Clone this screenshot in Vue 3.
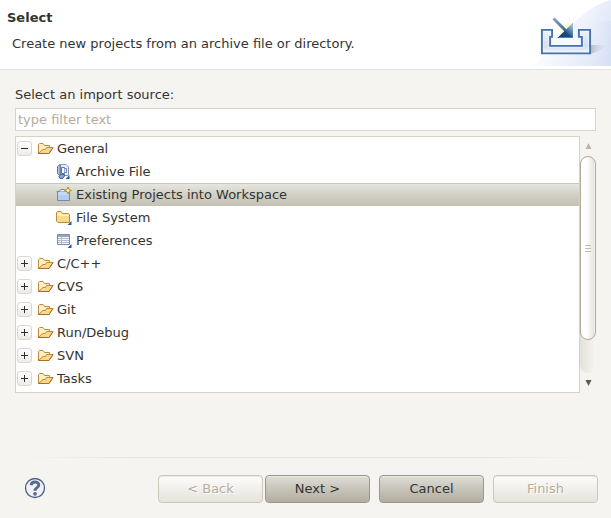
<script setup>
import { ref, computed } from 'vue'

const filter = ref('')
const selected = ref('Existing Projects into Workspace')
const groups = ref([
  {
    name: 'General',
    open: true,
    children: [
      { name: 'Archive File', icon: 'archive' },
      { name: 'Existing Projects into Workspace', icon: 'project' },
      { name: 'File System', icon: 'files' },
      { name: 'Preferences', icon: 'prefs' },
    ],
  },
  ...['C/C++', 'CVS', 'Git', 'Run/Debug', 'SVN', 'Tasks'].map((name) => ({ name, open: false, children: [] })),
])

const rows = computed(() => {
  const q = filter.value.toLowerCase()
  return groups.value.flatMap((g) => {
    const kids = g.children.filter((c) => c.name.toLowerCase().includes(q))
    if (!kids.length && !g.name.toLowerCase().includes(q)) return []
    const head = { name: g.name, icon: 'folder', group: g }
    return g.open ? [head, ...kids] : [head]
  })
})
</script>

<template>
  <main class="wizard">
    <header class="banner">
      <div class="titles">
        <h1>Select</h1>
        <p>Create new projects from an archive file or directory.</p>
      </div>
      <svg class="art" width="91" height="69" viewBox="0 0 91 69" aria-hidden="true">
        <defs>
          <linearGradient id="sky" gradientUnits="userSpaceOnUse" x1="22" y1="30" x2="88" y2="62">
            <stop offset="0" stop-color="#fff" />
            <stop offset=".5" stop-color="#edf2fb" />
            <stop offset="1" stop-color="#dae3f6" />
          </linearGradient>
          <linearGradient id="wave" x1="0" y1="0" x2="1" y2="0">
            <stop offset="0" stop-color="#fff" stop-opacity="0" />
            <stop offset="1" stop-color="#cfdbf3" />
          </linearGradient>
          <linearGradient id="tray" x1="0" y1="0" x2="0" y2="1">
            <stop offset="0" stop-color="#edf2fa" />
            <stop offset=".7" stop-color="#d6def0" />
            <stop offset="1" stop-color="#f3f6fc" />
          </linearGradient>
          <linearGradient id="shaft" gradientUnits="userSpaceOnUse" x1="33" y1="18" x2="47" y2="32">
            <stop offset="0" stop-color="#86a8ca" />
            <stop offset="1" stop-color="#2d5f93" />
          </linearGradient>
          <linearGradient id="tip" gradientUnits="userSpaceOnUse" x1="42" y1="38" x2="53" y2="27">
            <stop offset="0" stop-color="#1b4a7c" />
            <stop offset=".5" stop-color="#2f6297" />
            <stop offset="1" stop-color="#9dbad4" />
          </linearGradient>
          <radialGradient id="glow">
            <stop offset="0" stop-color="#fff9c8" />
            <stop offset="1" stop-color="#fffce0" stop-opacity=".5" />
          </radialGradient>
          <linearGradient id="shade" x1="0" y1="0" x2="1" y2="0">
            <stop offset="0" stop-color="#a5a3b2" stop-opacity=".7" />
            <stop offset="1" stop-color="#c9cbdc" stop-opacity="0" />
          </linearGradient>
        </defs>
        <path d="M10 66C40 50 52 10 91 0V66Z" fill="url(#sky)" />
        <path d="M50 34C62 24 76 20 91 21V66H50Z" fill="url(#wave)" opacity=".35" />
        <path d="M70 45L87 45Q81 51 70 54Z" fill="url(#shade)" />
        <circle cx="45" cy="29" r="7.500" fill="url(#glow)" />
        <path d="M30 37H61V46H30Z" fill="#f6f9fe" />
        <path d="M21.900 29.900H32.100V36.900H30.100V45.900H61.900V36.900H58.900V29.900H70.100V53.400H21.900Z" fill="url(#tray)" stroke="#4473ad" stroke-width="1.900" />
        <path d="M23.500 31.500H30.500V35.500H28.500V47.500H63.500V35.500H60.500V31.500H68.500V51.500H23.500Z" fill="none" stroke="#fff" stroke-opacity=".35" />
        <path d="M33.500 18.500L48 33" stroke="url(#shaft)" stroke-width="3" />
        <path d="M53 22.500V38H37.500Z" fill="url(#tip)" />
        <path d="M45 31L53 38H37.500Z" fill="#174372" opacity=".75" />
        <path d="M39 37.500H53" stroke="#5580a9" />
      </svg>
    </header>

    <section class="body">
      <label for="filter">Select an import source:</label>
      <input id="filter" v-model="filter" type="text" placeholder="type filter text" />
      <div class="tree-area">
        <ul class="tree" role="tree" aria-label="Import sources">
          <li
            v-for="row in rows"
            :key="row.name"
            role="treeitem"
            :class="{ child: !row.group, selected: selected === row.name }"
            :aria-selected="selected === row.name"
            @click="selected = row.name"
          >
            <button
              v-if="row.group"
              class="toggle"
              type="button"
              :aria-label="row.group.open ? 'Collapse' : 'Expand'"
              @click.stop="row.group.open = !row.group.open"
            >
              <svg width="13" height="13" viewBox="0 0 13 13">
                <path :d="row.group.open ? 'M3 6.500H10' : 'M3 6.500H10M6.500 3V10'" stroke="#2f2f2f" />
              </svg>
            </button>
            <svg class="icon" width="16" height="16" viewBox="0 0 16 16" aria-hidden="true">
              <g v-if="row.icon === 'folder'" stroke="#bd8a3e" stroke-linejoin="round">
                <path d="M.5 12.500V3.500L1.500 2.500H5L6.500 4.500H11.500V7" fill="#fdf0c4" />
                <path d="M.5 12.500L5 8.500H7.500L8.500 6.500H15L11 12.500Z" fill="#fbd98c" />
                <path d="M.5 12.500H11L15 6.500" fill="none" stroke="#a96c22" />
              </g>
              <g v-else-if="row.icon === 'archive'">
                <path d="M4.500 .5H10L12.500 3V11.500H4.500Z" fill="#e9eff9" stroke="#7f98c2" />
                <path d="M4 .5L1.500 2.500V9.500L4 11.500Z" fill="#b9c9e4" stroke="#5472a9" />
                <path d="M5.500 3.500H8.500V9.500H5.500Z" fill="#fff" stroke="#5875ab" />
                <path d="M8.500 4.500H10.500V8.500H8.500" fill="#dfe7f5" stroke="#7088b7" />
                <path d="M3 12.500L5 10.500H8.500V12L6.500 14.500H4Z" fill="#86a3d3" stroke="#42629f" />
                <path d="M13.500 11V15H9.500Z" fill="#17609f" />
              </g>
              <g v-else-if="row.icon === 'project'">
                <path d="M1.500 13.500V4.500H13.500V13.500Z" fill="#b3cdee" stroke="#7385ba" />
                <path d="M2 5H13V8H2Z" fill="#c4d9f3" />
                <path d="M.5 4.500H3.500L4.500 2.500H8.500L9.500 4.500" fill="#e7ebe9" stroke="#83898c" />
                <path d="M12 0L13 2.500L15.500 3.500L13 4.500L12 7L11 4.500L8.500 3.500L11 2.500Z" fill="#fff6b5" stroke="#b4901f" />
              </g>
              <g v-else-if="row.icon === 'files'">
                <path d="M.5 11V2.500L1.500 1.500H5L6.500 3.500H12L13.500 4.500V12.500H2Z" fill="#fbdb8b" stroke="#bd8a3c" />
                <path d="M1.500 3L2 2.500H4.500L6 4.500H12.500V6H1.500Z" fill="#fff0c0" />
                <path d="M15.500 11V15H11.500Z" fill="#17609f" />
              </g>
              <g v-else>
                <path d="M1.500 1.500H13.500V11.500H1.500Z" fill="#f4f7fc" stroke="#7f8cab" />
                <path d="M2 2H13V4H2Z" fill="#98a4c0" />
                <path d="M2 5.500H13M2 7.500H13M2 9.500H13M5.500 4V11" stroke="#b0bad1" />
                <path d="M15.500 11V15H11.500Z" fill="#17609f" />
              </g>
            </svg>
            <span>{{ row.name }}</span>
          </li>
        </ul>
        <div class="scroll">
          <button class="arrow" type="button" aria-label="Scroll up">
            <svg width="7" height="6" viewBox="0 0 7 6"><path d="M3.500 0L6.500 6H.5Z" fill="#bdb6a8" /></svg>
          </button>
          <div class="trough"><div class="thumb"><i></i><i></i><i></i></div></div>
          <button class="arrow" type="button" aria-label="Scroll down">
            <svg width="7" height="6" viewBox="0 0 7 6"><path d="M3.500 6L6.500 0H.5Z" fill="#5c5a56" /></svg>
          </button>
        </div>
      </div>
    </section>

    <footer>
      <hr />
      <div class="actions">
        <button class="help" type="button" aria-label="Help">
          <svg width="22" height="22" viewBox="0 0 22 22">
            <circle cx="11" cy="10" r="9.500" fill="#f2f2f4" stroke="#4b618b" stroke-width="1.300" />
            <path d="M7.200 7.300C7.200 3 14.800 3 14.800 7C14.800 9.800 11 9.500 11 12.800" fill="none" stroke="#586b93" stroke-width="3" />
            <circle cx="11" cy="15.800" r="1.900" fill="#586b93" />
          </svg>
        </button>
        <div class="pair">
          <button class="btn" type="button" disabled>&lt; Back</button>
          <button class="btn" type="button">Next &gt;</button>
        </div>
        <button class="btn" type="button">Cancel</button>
        <button class="btn" type="button" disabled>Finish</button>
      </div>
    </footer>
  </main>
</template>

<style>
body {
  margin: 0;
  background: #f6f4f1;
}
</style>

<style scoped>
.wizard {
  display: flex;
  flex-direction: column;
  min-height: 100vh;
  box-sizing: border-box;
  font: 13px/20px "DejaVu Sans", sans-serif;
  color: #333;
}
.banner {
  display: flex;
  justify-content: space-between;
  background: #fff;
  border-bottom: 1px solid #e4e2de;
}
.titles {
  padding: 8px 0 0 7px;
}
h1 {
  margin: 0;
  font-size: 13px;
  line-height: 20px;
}
p {
  margin: 6px 0 0 5px;
}
.art {
  flex: none;
}
.body {
  display: flex;
  flex-direction: column;
  padding: 15px 15px 0;
}
label {
  margin-bottom: 3px;
}
input {
  box-sizing: border-box;
  width: 100%;
  height: 23px;
  padding: 0 2px;
  border: 1px solid #d9d3c7;
  background: #fff;
  font: inherit;
  color: inherit;
  outline: none;
}
input::placeholder {
  color: #b8ab9c;
  opacity: 1;
}
.tree-area {
  display: flex;
  margin-top: 5px;
}
.tree {
  flex: 1;
  margin: 0;
  padding: 0 0 2px;
  list-style: none;
  background: #fff;
  border: 1px solid #d6d1c0;
}
li {
  display: flex;
  align-items: center;
  box-sizing: border-box;
  height: 23px;
  padding-left: 1px;
  cursor: default;
}
li.child {
  padding-left: 40px;
}
li.selected {
  background: linear-gradient(#e8e8e2, #d2d1c7 50%, #c4c1b3);
  box-shadow: inset 0 1px #c9c5b8;
}
.toggle {
  display: flex;
  align-items: center;
  justify-content: center;
  width: 15px;
  height: 15px;
  padding: 0;
  margin-right: 6px;
  border: 1px solid #ddd7cd;
  border-radius: 3px;
  background: linear-gradient(#fff, #eeebe6);
}
.icon {
  flex: none;
  margin-right: 4px;
}
.toggle + .icon {
  margin-right: 3px;
}
.scroll {
  display: flex;
  flex-direction: column;
  width: 16px;
}
.arrow {
  display: flex;
  align-items: center;
  justify-content: center;
  height: 20px;
  padding: 0;
  border: 0;
  background: none;
}
.trough {
  flex: 1;
  border-radius: 8px;
  background: linear-gradient(90deg, #e4e0d9, #f8f6f3);
}
.thumb {
  display: flex;
  flex-direction: column;
  align-items: center;
  justify-content: center;
  gap: 2px;
  box-sizing: border-box;
  height: 85%;
  border: 1px solid #b3a999;
  border-radius: 8px;
  background: linear-gradient(90deg, #fff 40%, #e9e5df 90%, #f5f3ef);
}
.thumb i {
  width: 6px;
  height: 1px;
  background: #c4bdb0;
}
footer {
  margin-top: auto;
  padding: 0 13px 15px 24px;
}
hr {
  height: 1px;
  margin: 0 0 17px -9px;
  border: 0;
  background: linear-gradient(90deg, transparent, #e4e1dc 25%, #e4e1dc 75%, transparent);
}
.actions {
  display: flex;
  align-items: center;
  gap: 9px;
}
.help {
  display: flex;
  margin-right: auto;
  padding: 0;
  border: 0;
  background: none;
}
.pair {
  display: flex;
  gap: 2px;
}
.btn {
  width: 105px;
  height: 28px;
  padding: 0;
  border: 1px solid #9b9888;
  border-radius: 4px;
  background: linear-gradient(#dfded8, #c7c4b9 50%, #b3ad9e);
  box-shadow: inset 0 1px #e9e8e3;
  font: inherit;
  color: #333;
}
.btn:disabled {
  border-color: #cbc8bb;
  background: linear-gradient(#fdfdfc, #f1efeb 50%, #e6e3dc);
  color: #b8ab9c;
  text-shadow: 1px 1px #fff;
}
</style>
